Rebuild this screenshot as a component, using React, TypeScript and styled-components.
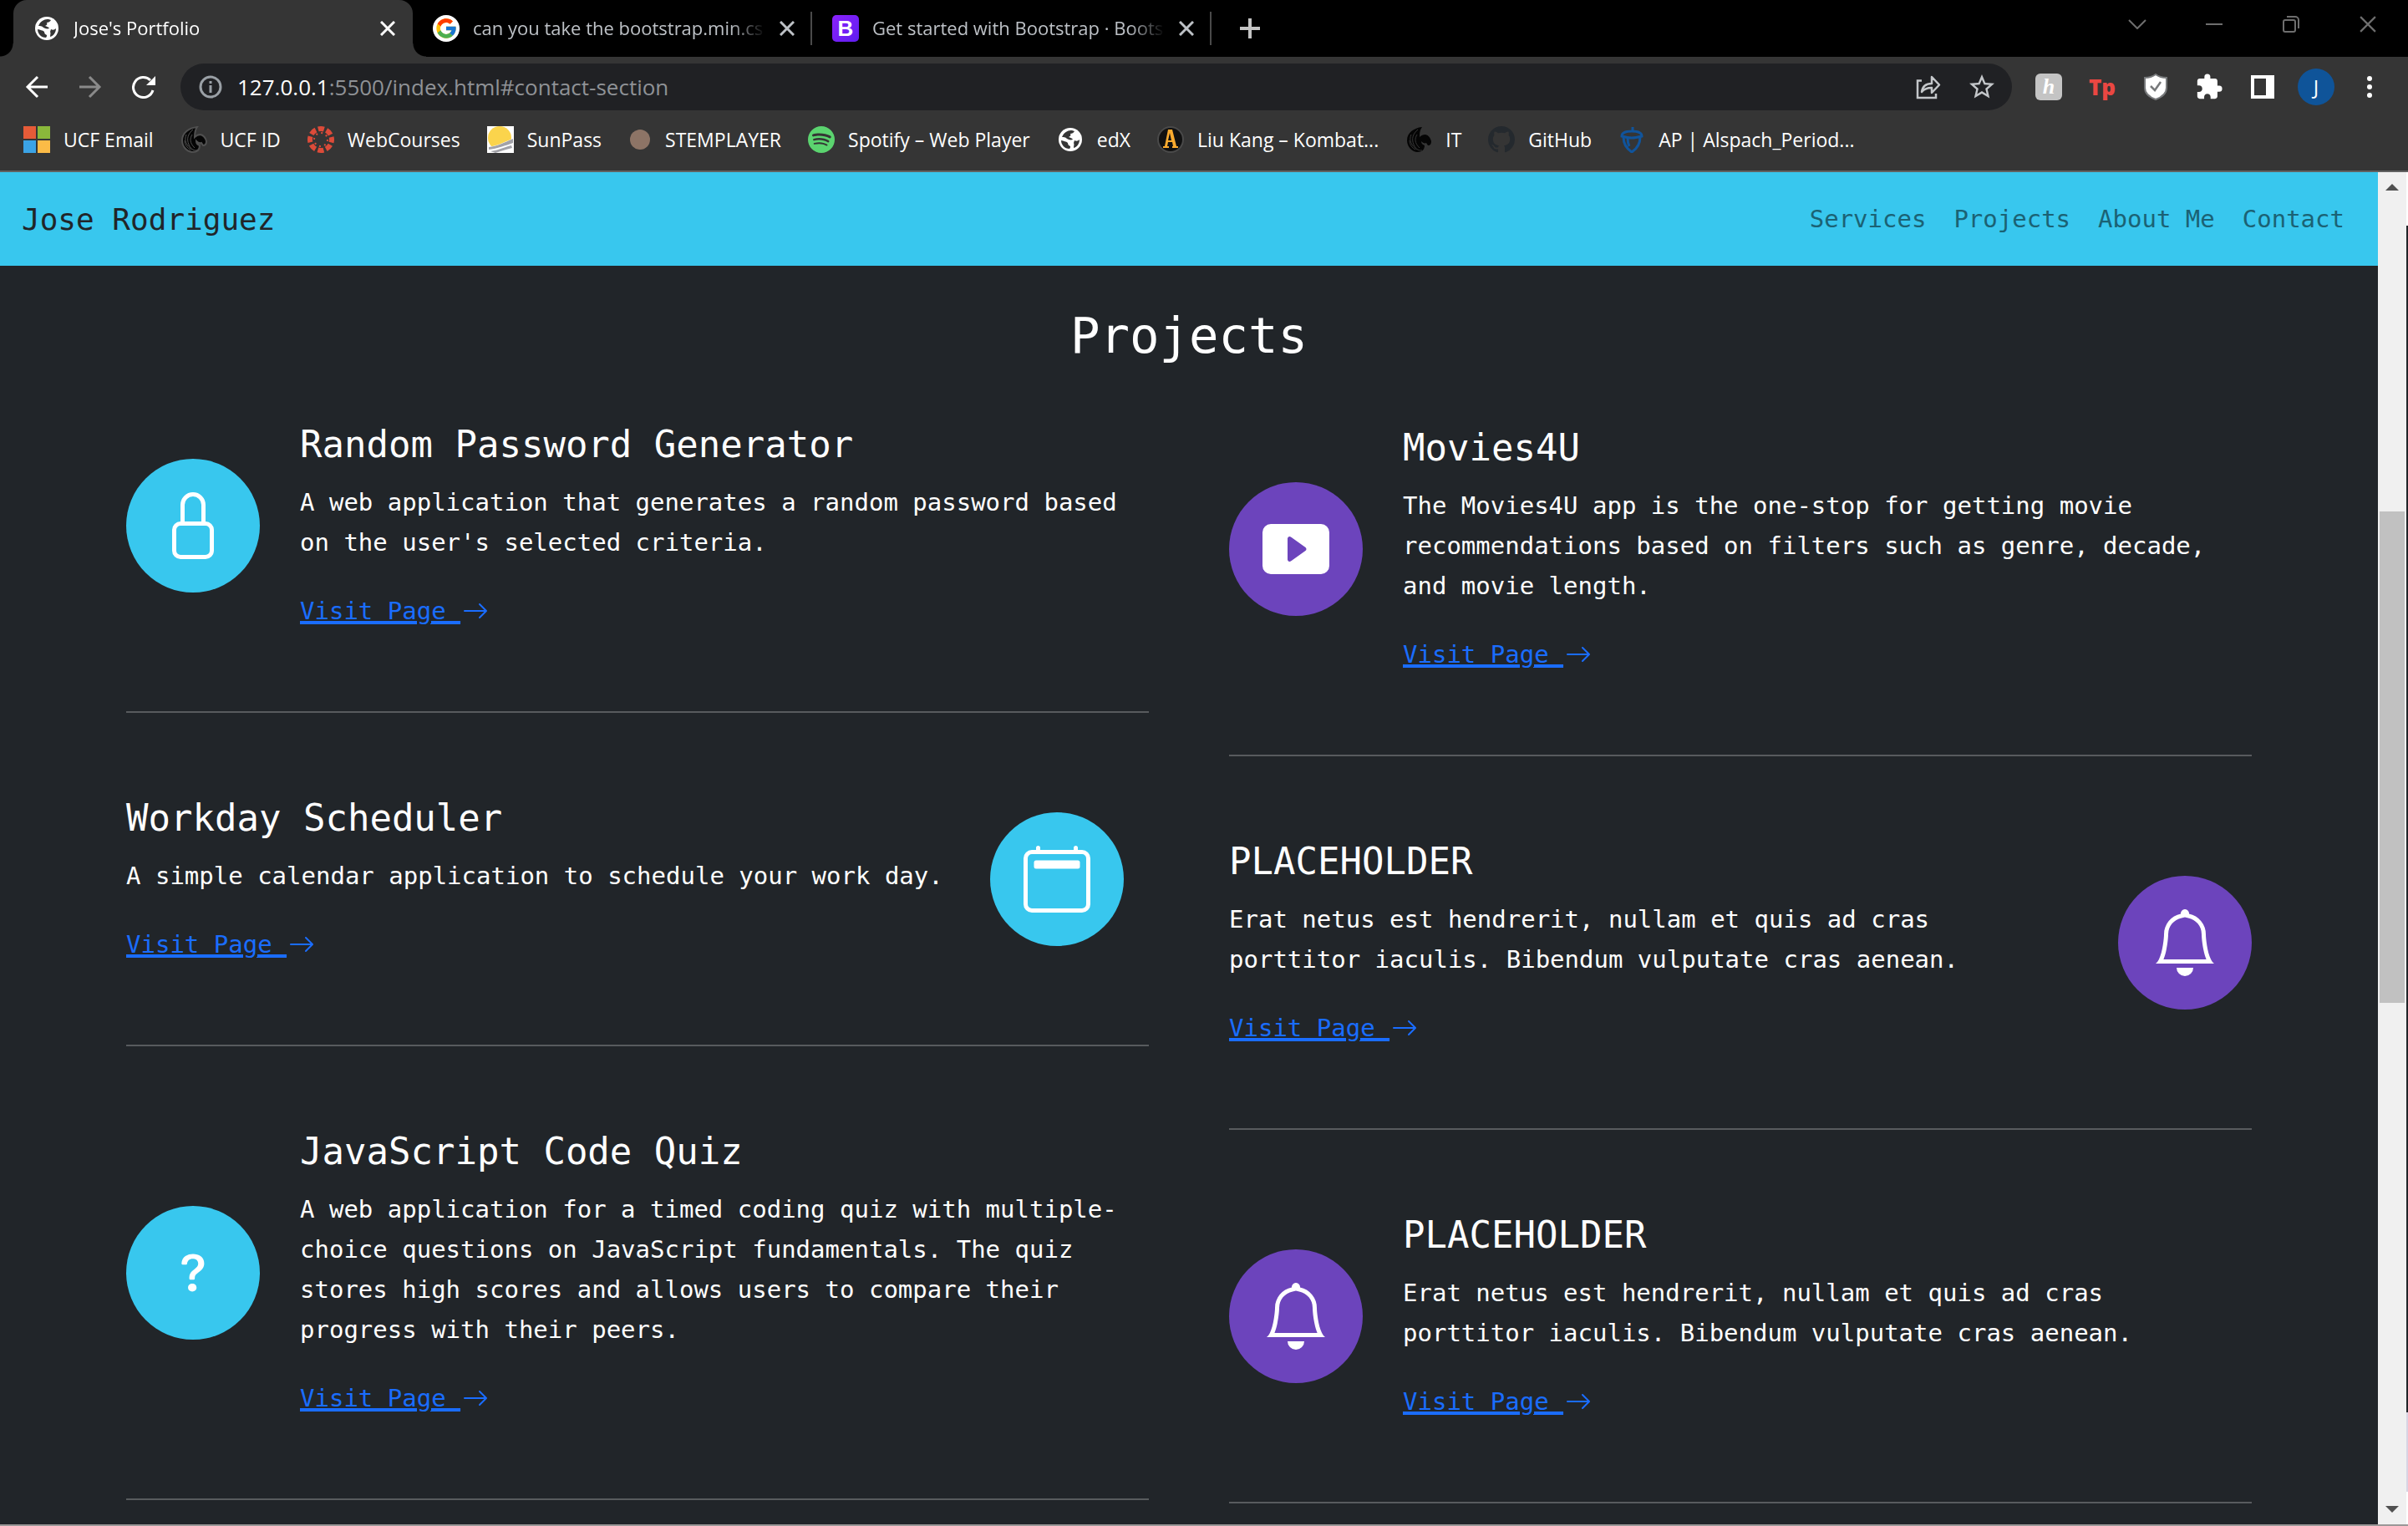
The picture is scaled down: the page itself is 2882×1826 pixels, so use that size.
import React from "react";
import styled, { createGlobalStyle, css } from "styled-components";
import { BsLock, BsPlayBtnFill, BsCalendar2, BsBell, BsQuestion, BsArrowRight, BsSpotify, BsGithub } from "react-icons/bs";
import { MdExtension, MdStarBorder } from "react-icons/md";
import { FcGoogle } from "react-icons/fc";

const ui = `"Open Sans", "Noto Sans", sans-serif`;
const mono = `"DejaVu Sans Mono", "Liberation Mono", monospace`;

const Global = createGlobalStyle`
  *, *::before, *::after { box-sizing: border-box; }
  body { margin: 0; background: #212529; overflow: hidden; }
  button, input { font: inherit; color: inherit; background: none; border: 0; padding: 0; margin: 0; }
  h1, h2, p { margin: 0; font-weight: 400; }
  svg { display: block; flex: none; }
`;

const Browser = styled.div`
  display: flex;
  flex-direction: column;
  height: 100vh;
  font-family: ${ui};
  color: #fff;
`;

/* ---------- tab strip ---------- */
const TabStrip = styled.header`
  display: flex;
  align-items: center;
  height: 68px;
  padding-left: 16px;
  background: #000;
`;
const Tab = styled.div<{ $active?: boolean }>`
  position: relative;
  display: flex;
  align-items: center;
  gap: 16px;
  width: 478px;
  height: 68px;
  padding: 0 20px 0 24px;
  font-size: 22px;
  color: ${(p) => (p.$active ? "#fff" : "#bdc1c6")};
  ${(p) =>
    p.$active
      ? css`
          background: #353535;
          border-radius: 16px 16px 0 0;
          &::before, &::after {
            content: "";
            position: absolute;
            bottom: 0;
            width: 16px;
            height: 16px;
          }
          &::before { left: -16px; background: radial-gradient(circle at 0 0, #000 15px, #353535 16px); }
          &::after { right: -16px; background: radial-gradient(circle at 100% 0, #000 15px, #353535 16px); }
        `
      : css`
          &::after {
            content: "";
            position: absolute;
            right: 0;
            width: 2px;
            height: 40px;
            background: #4a4a4a;
          }
        `}
`;
const TabTitle = styled.span`
  flex: 1;
  min-width: 0;
  padding-bottom: 2px;
  overflow: hidden;
  white-space: nowrap;
  mask-image: linear-gradient(to right, #000 88%, transparent);
`;
const IconButton = styled.button<{ $w?: number; $dim?: boolean }>`
  display: flex;
  align-items: center;
  justify-content: center;
  width: ${(p) => p.$w ?? 32}px;
  height: 40px;
  flex: none;
  color: ${(p) => (p.$dim ? "#8a8a8a" : "inherit")};
`;
const NewTab = styled(IconButton)`
  margin-left: 30px;
  color: #c4c4c4;
`;
const WindowButtons = styled.div`
  display: flex;
  align-items: center;
  gap: 60px;
  height: 40px;
  margin: 0 32px 10px auto;
  color: #6e6e6e;
`;

/* ---------- toolbar ---------- */
const Toolbar = styled.div`
  display: flex;
  align-items: center;
  height: 72px;
  padding: 0 30px 0 28px;
  background: #353535;
`;
const NavButtons = styled.div`
  display: flex;
  gap: 32px;
  margin-right: 28px;
`;
const Omnibox = styled.form`
  display: flex;
  align-items: center;
  gap: 18px;
  flex: 1;
  height: 56px;
  padding: 0 20px 0 22px;
  border-radius: 28px;
  background: #202124;
`;
const PageActions = styled.div`
  display: flex;
  gap: 32px;
`;
const AddressField = styled.label`
  position: relative;
  flex: 1;
  font-size: 26px;
  line-height: 40px;
  color: #8f9296;
`;
const AddressInput = styled.input`
  position: absolute;
  inset: 0;
  width: 100%;
  color: transparent;
  caret-color: #fff;
  outline: 0;
`;
const Host = styled.span`
  color: #fff;
`;
const Extensions = styled.div`
  display: grid;
  grid-template-columns: repeat(7, 32px);
  gap: 32px;
  place-items: center;
  margin-left: 28px;
`;
const Honey = styled.button`
  width: 32px;
  height: 32px;
  border-radius: 6px;
  background: #c4c4c4;
  color: #fff;
  font: italic 700 26px/30px "Liberation Serif", serif;
`;
const Tp = styled.button`
  font: 800 26px/32px "Open Sans", sans-serif;
  color: #ea4742;
`;
const Avatar = styled.button`
  width: 44px;
  height: 44px;
  border-radius: 50%;
  background: #0f5499;
  font-size: 24px;
  line-height: 44px;
`;

/* ---------- bookmarks ---------- */
const Bookmarks = styled.nav`
  display: flex;
  align-items: center;
  gap: 32px;
  height: 66px;
  padding: 0 28px 10px;
  background: #353535;
  border-bottom: 2px solid #616161;
`;
const Bookmark = styled.a`
  display: flex;
  align-items: center;
  gap: 16px;
  font-size: 23px;
  line-height: 32px;
  white-space: nowrap;
  color: #fff;
  text-decoration: none;
`;

/* ---------- page ---------- */
const Viewport = styled.div`
  display: flex;
  flex: 1;
  min-height: 0;
  border-bottom: 2px solid #9b9898;
`;
const Page = styled.div`
  flex: 1;
  min-width: 0;
  overflow: hidden;
  background: #212529;
  font-family: ${mono};
`;
const SiteNav = styled.nav`
  display: flex;
  align-items: center;
  justify-content: space-between;
  height: 112px;
  padding: 0 40px 0 26px;
  background: #38c7ee;
`;
const Brand = styled.a`
  font-size: 36px;
  color: #212529;
  text-decoration: none;
`;
const SiteLinks = styled.div`
  display: flex;
  gap: 33px;
`;
const SiteLink = styled.a`
  font-size: 29px;
  color: #1b6274;
  text-decoration: none;
`;
const Section = styled.main`
  max-width: 2640px;
  margin: 0 auto;
  padding: 45px 48px 0;
`;
const SectionTitle = styled.h1`
  margin-bottom: 62px;
  font-size: 59px;
  line-height: 77px;
  text-align: center;
`;
const Columns = styled.div`
  display: grid;
  grid-template-columns: 1fr 1fr;
  gap: 96px;
`;
const Column = styled.div<{ $drop?: boolean }>`
  padding-top: ${(p) => (p.$drop ? 4 : 0)}px;
`;
const Project = styled.article<{ $reverse?: boolean }>`
  display: flex;
  flex-direction: ${(p) => (p.$reverse ? "row-reverse" : "row")};
  justify-content: ${(p) => (p.$reverse ? "flex-end" : "flex-start")};
  align-items: center;
  gap: 48px;
`;
const Disc = styled.div<{ $tone: Tone }>`
  display: grid;
  place-items: center;
  flex: none;
  width: 160px;
  height: 160px;
  border-radius: 50%;
  background: ${(p) => (p.$tone === "info" ? "#38c7ee" : "#6c44bc")};
`;
const Divider = styled.hr`
  height: 2px;
  margin: 96px 0;
  border: 0;
  background: #585b5e;
`;
const Name = styled.h2`
  margin-bottom: 15px;
  font-size: 44px;
  line-height: 60px;
`;
const Blurb = styled.p`
  margin-bottom: 32px;
  padding-right: 8px;
  font-size: 29px;
  line-height: 48px;
`;
const Visit = styled.a`
  display: flex;
  align-items: center;
  gap: 2px;
  height: 50px;
  padding-top: 2px;
  font-size: 29px;
  line-height: 48px;
  white-space: pre;
  color: #1a6dff;
`;
const VisitText = styled.u`
  text-underline-offset: 3px;
  text-decoration-thickness: 3px;
`;

/* ---------- scrollbar ---------- */
const ScrollTrack = styled.div`
  display: flex;
  flex-direction: column;
  align-items: center;
  width: 34px;
  padding: 14px 2px;
  background: #f0f0f0;
`;
const Lead = styled.div`
  flex: 384 1 0;
`;
const Thumb = styled.div`
  flex: 588 1 0;
  width: 100%;
  background: #c1c1c1;
`;
const Trail = styled.div`
  flex: 602 1 0;
`;
const WindowEdge = styled.div`
  width: 2px;
  background: linear-gradient(#fff 64px, #212529 64px, #212529 1484px, #d8d4e4 1484px, #d8d4e4 1579px, #fff 1579px);
`;

/* ---------- drawings ---------- */
type Tone = "info" | "purple";

const Cross = ({ size = 18, w = 3 }: { size?: number; w?: number }) => (
  <svg width={size} height={size} viewBox="0 0 18 18" stroke="currentColor" strokeWidth={w} fill="none">
    <path d="M1 1 17 17M17 1 1 17" />
  </svg>
);
const Globe = () => (
  <svg width="32" height="32" viewBox="-2 -2 32 32">
    <circle cx="14" cy="14" r="14" fill="#fff" />
    <g fill="#353535">
      <path d="M5 9C8 4 12 3 16 3l3 1c-1 2-3 3-5 3 1 2 0 3-2 4 2 1 4 1 5 3-3 1-5 0-7-1-2-2-4-2-6-2z" />
      <path d="M3 15c3 1 6 1 8 3 0 2 1 3 3 4 0 1 0 2-1 3C7 25 3 20 3 15z" />
      <path d="M19 15c2 1 4 1 6-1 0 5-3 9-7 10 0-3 1-4 0-6z" />
    </g>
  </svg>
);
const Back = () => (
  <svg width="28" height="28" viewBox="0 0 28 28" stroke="currentColor" strokeWidth="3" fill="none">
    <path d="M27 14H4M15 2 3 14l12 12" />
  </svg>
);
const Forward = () => (
  <svg width="28" height="28" viewBox="0 0 28 28" stroke="currentColor" strokeWidth="3" fill="none">
    <path d="M1 14h23M13 2l12 12-12 12" />
  </svg>
);
const Reload = () => (
  <svg width="28" height="28" viewBox="0 0 28 28" fill="none">
    <path d="M25 18A12 12 0 1 1 22 6" stroke="currentColor" strokeWidth="3" />
    <path d="M28 1v11H17z" fill="currentColor" />
  </svg>
);
const Info = () => (
  <svg width="28" height="28" viewBox="0 0 28 28" fill="none" stroke="#9aa0a6" strokeWidth="3">
    <circle cx="14" cy="14" r="12" />
    <path d="M14 12v9M14 7v3" />
  </svg>
);
const Share = () => (
  <svg width="30" height="30" viewBox="0 0 30 30" fill="none" stroke="#c4c7ca" strokeWidth="2.500">
    <path d="M7 7.500H2V28h22v-5" />
    <path d="M7 21c1-7 5-10 12-10V3l9 9.500-9 9.500v-6c-6 0-9 1-12 5z" strokeLinejoin="round" />
  </svg>
);
const Shield = () => (
  <svg width="28" height="32" viewBox="0 0 28 32">
    <path fill="#fff" stroke="#77797b" strokeWidth="2" d="M14 1c4 3 8 4 13 4v12c0 6-5 11-13 14C6 28 1 23 1 17V5c5 0 9-1 13-4z" />
    <path fill="none" stroke="#77797b" strokeWidth="2.500" d="m8 15 5 5 7-10" />
  </svg>
);
const SidePanel = () => (
  <svg width="28" height="28" viewBox="0 0 28 28" fill="#fff" fillRule="evenodd">
    <path d="M0 0h28v28H0zM4 4v20h14V4z" />
  </svg>
);
const Dots = () => (
  <svg width="6" height="26" viewBox="0 0 6 26" fill="#fff">
    <circle cx="3" cy="3" r="3" />
    <circle cx="3" cy="13" r="3" />
    <circle cx="3" cy="23" r="3" />
  </svg>
);
const Microsoft = () => (
  <svg width="32" height="32" viewBox="0 0 32 32">
    <path fill="#e65b38" d="M0 0h15v15H0z" />
    <path fill="#8ab83b" d="M17 0h15v15H17z" />
    <path fill="#3ba3e6" d="M0 17h15v15H0z" />
    <path fill="#fbbb47" d="M17 17h15v15H17z" />
  </svg>
);
const Pegasus = ({ soft }: { soft?: boolean }) => (
  <svg width="32" height="32" viewBox="0 0 32 32">
    <path
      fill="#050505"
      stroke={soft ? "#505050" : "none"}
      strokeWidth="2"
      d="M20 1C10 2 2 8 2 17c0 7 5 13 12 14 6 0 9-3 9-8-3-1-4-3-4-5 2 2 4 3 6 2l2 3c3 0 4-2 4-5-1-4-3-7-7-8-3 0-5 1-7 3 0-4 0-8 3-12z"
    />
    <path fill="none" stroke={soft ? "#505050" : "#353535"} strokeWidth="1" d="M15 4C9 9 7 15 10 22s7 7 10 7M14 10c-3 5-3 10 3 16M7 10c-3 7 0 13 7 18M5 17c0 5 3 9 7 11" />
  </svg>
);
const Canvas = () => (
  <svg width="32" height="32" viewBox="0 0 32 32">
    <circle cx="16" cy="16" r="13" fill="none" stroke="#dd4b39" strokeWidth="6" strokeDasharray="7.200 3" strokeDashoffset="3.600" />
    <circle cx="16" cy="16" r="8" fill="none" stroke="#dd4b39" strokeWidth="2" strokeDasharray="2 4.280" />
  </svg>
);
const Sun = () => (
  <svg width="32" height="32" viewBox="0 0 32 32">
    <path fill="#fff" d="M0 0h32v32H0z" />
    <circle cx="15" cy="14" r="14" fill="#fbd44c" />
    <path fill="#fff" d="M0 25C10 24 20 20 32 14v18H0z" />
    <path fill="#a2a2a8" d="M2 25C12 24 20 20 31 15v5C22 23 12 27 2 28zM4 30c8-1 14-4 25-7l1 3c-8 2-14 4-20 6z" />
  </svg>
);
const Stem = () => (
  <svg width="28" height="32" viewBox="0 0 28 32">
    <circle cx="14" cy="16" r="12" fill="#8d7466" />
  </svg>
);
const Kombat = () => (
  <svg width="32" height="32" viewBox="0 0 32 32">
    <circle cx="16" cy="16" r="15" fill="#111" stroke="#4a4a4a" strokeWidth="2" />
    <path fill="#fbab2f" fillRule="evenodd" d="M13 4h5l5 20h2v2h-7v-2h1l-1-5h-5l-1 5h2v2H7v-2h2zM15 8l-2 9h4z" />
  </svg>
);
const Acorn = () => (
  <svg width="32" height="32" viewBox="0 0 32 32" fill="none" stroke="#10549c" strokeWidth="3">
    <path d="M17 6V1M4 12c0-4 5-6 12-6s12 2 12 6c-4 1-8 2-12 2S8 13 4 12z" />
    <path d="M6 13c0 8 4 14 10 18 6-4 10-10 10-18M11 14c0 4 1 8 2 10" />
  </svg>
);
const GoogleDisc = styled.span`
  display: grid;
  place-items: center;
  width: 32px;
  height: 32px;
  border-radius: 50%;
  background: #fff;
`;
const BootstrapTile = styled.span`
  width: 32px;
  height: 32px;
  border-radius: 5px;
  background: linear-gradient(135deg, #8a22fb, #5f1df0);
  font: 700 26px/32px "Liberation Sans", sans-serif;
  text-align: center;
  color: #fff;
`;

/* ---------- content ---------- */
const tabs = [
  { title: "Jose's Portfolio", icon: <Globe />, active: true },
  { title: "can you take the bootstrap.min.cs", icon: <GoogleDisc><FcGoogle size={28} /></GoogleDisc> },
  { title: "Get started with Bootstrap · Boots", icon: <BootstrapTile>B</BootstrapTile> },
];

const bookmarks: [string, React.ReactNode][] = [
  ["UCF Email", <Microsoft />],
  ["UCF ID", <Pegasus soft />],
  ["WebCourses", <Canvas />],
  ["SunPass", <Sun />],
  ["STEMPLAYER", <Stem />],
  ["Spotify – Web Player", <BsSpotify size={32} color="#5bd46f" />],
  ["edX", <Globe />],
  ["Liu Kang – Kombat...", <Kombat />],
  ["IT", <Pegasus />],
  ["GitHub", <BsGithub size={32} color="#24292e" />],
  ["AP | Alspach_Period...", <Acorn />],
];

type Item = { name: string; text: string; tone: Tone; icon: React.ReactNode; reverse?: boolean };
const bell = <BsBell size={80} />;
const erat = "Erat netus est hendrerit, nullam et quis ad cras porttitor iaculis. Bibendum vulputate cras aenean.";
const left: Item[] = [
  { name: "Random Password Generator", text: "A web application that generates a random password based on the user's selected criteria.", tone: "info", icon: <BsLock size={80} /> },
  { name: "Workday Scheduler", text: "A simple calendar application to schedule your work day.", tone: "info", icon: <BsCalendar2 size={80} />, reverse: true },
  { name: "JavaScript Code Quiz", text: "A web application for a timed coding quiz with multiple-choice questions on JavaScript fundamentals. The quiz stores high scores and allows users to compare their progress with their peers.", tone: "info", icon: <BsQuestion size={80} /> },
];
const right: Item[] = [
  { name: "Movies4U", text: "The Movies4U app is the one-stop for getting movie recommendations based on filters such as genre, decade, and movie length.", tone: "purple", icon: <BsPlayBtnFill size={80} /> },
  { name: "PLACEHOLDER", text: erat, tone: "purple", icon: bell, reverse: true },
  { name: "PLACEHOLDER", text: erat, tone: "purple", icon: bell },
];

const ProjectList = ({ items }: { items: Item[] }) => (
  <>
    {items.map((it, i) => (
      <React.Fragment key={i}>
        <Project $reverse={it.reverse}>
          <Disc $tone={it.tone}>{it.icon}</Disc>
          <div>
            <Name>{it.name}</Name>
            <Blurb>{it.text}</Blurb>
            <Visit href="#">
              <VisitText>{"Visit Page "}</VisitText>
              <BsArrowRight size={32} />
            </Visit>
          </div>
        </Project>
        <Divider />
      </React.Fragment>
    ))}
  </>
);

export default function App() {
  return (
    <Browser>
      <Global />
      <TabStrip>
        {tabs.map((t) => (
          <Tab key={t.title} $active={t.active}>
            {t.icon}
            <TabTitle>{t.title}</TabTitle>
            <IconButton $w={20} aria-label="Close tab">
              <Cross />
            </IconButton>
          </Tab>
        ))}
        <NewTab aria-label="New tab">
          <svg width="24" height="24" viewBox="0 0 24 24" stroke="currentColor" strokeWidth="4">
            <path d="M12 0v24M0 12h24" />
          </svg>
        </NewTab>
        <WindowButtons>
          <IconButton aria-label="Search tabs">
            <svg width="22" height="12" viewBox="0 0 22 12" fill="none" stroke="currentColor" strokeWidth="2">
              <path d="m1 1 10 10L21 1" />
            </svg>
          </IconButton>
          <IconButton aria-label="Minimize">
            <svg width="20" height="2" viewBox="0 0 20 2" fill="currentColor">
              <path d="M0 0h20v2H0z" />
            </svg>
          </IconButton>
          <IconButton aria-label="Restore">
            <svg width="20" height="20" viewBox="0 0 20 20" fill="none" stroke="currentColor" strokeWidth="2">
              <rect x="1" y="5" width="14" height="14" rx="2" />
              <path d="M5 1h10a4 4 0 0 1 4 4v10" />
            </svg>
          </IconButton>
          <IconButton aria-label="Close">
            <Cross size={20} w={2} />
          </IconButton>
        </WindowButtons>
      </TabStrip>

      <Toolbar>
        <NavButtons>
          <IconButton aria-label="Back"><Back /></IconButton>
          <IconButton aria-label="Forward" $dim><Forward /></IconButton>
          <IconButton aria-label="Reload"><Reload /></IconButton>
        </NavButtons>
        <Omnibox>
          <Info />
          <AddressField>
            <Host>127.0.0.1</Host>:5500/index.html#contact-section
            <AddressInput aria-label="Address" />
          </AddressField>
          <PageActions>
            <IconButton type="button" aria-label="Share"><Share /></IconButton>
            <IconButton type="button" aria-label="Bookmark this page"><MdStarBorder size={36} color="#c4c7ca" /></IconButton>
          </PageActions>
        </Omnibox>
        <Extensions>
          <Honey>h</Honey>
          <Tp>Tp</Tp>
          <IconButton aria-label="Shield"><Shield /></IconButton>
          <IconButton aria-label="Extensions"><MdExtension size={34} /></IconButton>
          <IconButton aria-label="Side panel"><SidePanel /></IconButton>
          <Avatar aria-label="Profile">J</Avatar>
          <IconButton aria-label="Menu"><Dots /></IconButton>
        </Extensions>
      </Toolbar>

      <Bookmarks>
        {bookmarks.map(([label, icon]) => (
          <Bookmark key={label} href="#">
            {icon}
            {label}
          </Bookmark>
        ))}
      </Bookmarks>

      <Viewport>
        <Page>
          <SiteNav>
            <Brand href="#">Jose Rodriguez</Brand>
            <SiteLinks>
              <SiteLink href="#">Services</SiteLink>
              <SiteLink href="#">Projects</SiteLink>
              <SiteLink href="#">About Me</SiteLink>
              <SiteLink href="#">Contact</SiteLink>
            </SiteLinks>
          </SiteNav>
          <Section>
            <SectionTitle>Projects</SectionTitle>
            <Columns>
              <Column>
                <ProjectList items={left} />
              </Column>
              <Column $drop>
                <ProjectList items={right} />
              </Column>
            </Columns>
          </Section>
        </Page>
        <ScrollTrack>
          <svg width="16" height="8" viewBox="0 0 16 8" fill="#505050"><path d="M0 8 8 0l8 8z" /></svg>
          <Lead />
          <Thumb />
          <Trail />
          <svg width="16" height="8" viewBox="0 0 16 8" fill="#505050"><path d="M0 0h16L8 8z" /></svg>
        </ScrollTrack>
        <WindowEdge />
      </Viewport>
    </Browser>
  );
}
